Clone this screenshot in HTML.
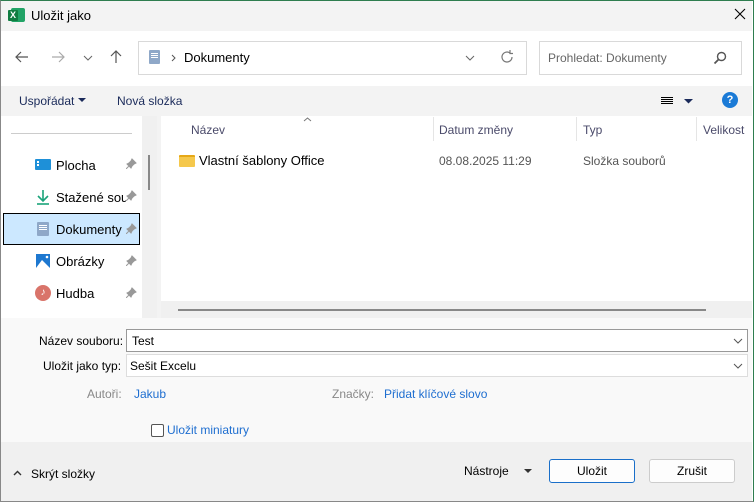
<!DOCTYPE html>
<html><head><meta charset="utf-8"><style>
*{box-sizing:border-box;margin:0;padding:0}
body{width:754px;height:502px;overflow:hidden;font-family:"Liberation Sans",sans-serif;font-size:12px;color:#000;background:#fff;position:relative}
.a{position:absolute}
.t{white-space:nowrap}
</style></head><body>
<div class="a" style="left:0;top:0;width:754px;height:502px;border:1px solid #888;border-top:1px solid #2e7d4f;border-right:1px solid #2e7d4f"></div>
<div class="a" style="left:1px;top:1px;width:751px;height:30px;background:#f3f3f3"></div>
<div class="a" style="left:11px;top:8px;width:14px;height:14px;background:#21a366;border-radius:2px"></div>
<div class="a" style="left:8px;top:10px;width:10px;height:11px;background:#107c41;border-radius:1px;color:#fff;font-size:9px;font-weight:bold;text-align:center;line-height:11px">X</div>
<div class="a t" style="left:31px;top:8px;font-size:13px">Uložit jako</div>
<svg class="a" style="left:734px;top:8px" width="12" height="12"><path d="M1 1L11 11M11 1L1 11" stroke="#000" stroke-width="1.1"/></svg>
<svg class="a" style="left:15px;top:51px" width="14" height="12"><path d="M13 6H1M6 1L1 6L6 11" stroke="#555" fill="none" stroke-width="1.2"/></svg>
<svg class="a" style="left:51px;top:51px" width="14" height="12"><path d="M1 6H13M8 1L13 6L8 11" stroke="#aaa" fill="none" stroke-width="1.2"/></svg>
<svg class="a" style="left:83px;top:55px" width="10" height="6"><path d="M1 1L5 5L9 1" stroke="#666" fill="none"/></svg>
<svg class="a" style="left:110px;top:50px" width="12" height="14"><path d="M6 13V1M1 6L6 1L11 6" stroke="#555" fill="none" stroke-width="1.2"/></svg>
<div class="a" style="left:138px;top:41px;width:389px;height:34px;border:1px solid #d9d9d9;background:#fff"></div>
<div class="a" style="left:149px;top:50px;width:11px;height:14px;background:#8fa8c8;border-radius:1px"></div>
<div class="a" style="left:151px;top:53px;width:7px;height:1px;background:#fff;box-shadow:0 2px 0 #fff,0 4px 0 #fff"></div>
<svg class="a" style="left:171px;top:54px" width="5" height="8"><path d="M1 1L4 4L1 7" stroke="#555" fill="none"/></svg>
<div class="a t" style="left:184px;top:50px;font-size:13px">Dokumenty</div>
<svg class="a" style="left:465px;top:55px" width="10" height="6"><path d="M1 1L5 5L9 1" stroke="#666" fill="none"/></svg>
<svg class="a" style="left:500px;top:50px" width="14" height="14"><path d="M12 7A5 5 0 1 1 10 3M10 0V3.5H13" stroke="#777" fill="none" stroke-width="1.2"/></svg>
<div class="a" style="left:539px;top:41px;width:203px;height:34px;border:1px solid #d9d9d9;background:#fff"></div>
<div class="a t" style="left:548px;top:51px;color:#666">Prohledat: Dokumenty</div>
<svg class="a" style="left:713px;top:51px" width="14" height="14"><circle cx="8.5" cy="5.5" r="4" stroke="#555" fill="none" stroke-width="1.4"/><path d="M5.5 8.5L1.5 12.5" stroke="#555" stroke-width="1.8"/></svg>
<div class="a" style="left:1px;top:86px;width:751px;height:30px;background:#f3f3f3"></div>
<div class="a t" style="left:19px;top:94px;color:#1a2a5a">Uspořádat</div>
<svg class="a" style="left:78px;top:98px" width="8" height="5"><path d="M0 0H8L4 4Z" fill="#1a2a5a"/></svg>
<div class="a t" style="left:117px;top:94px;color:#1a2a5a">Nová složka</div>
<div class="a" style="left:661px;top:97px;width:12px;height:1px;background:#000;box-shadow:0 2px 0 #000,0 4px 0 #000,0 6px 0 #000"></div>
<svg class="a" style="left:684px;top:99px" width="9" height="5"><path d="M0 0H9L4.5 4.5Z" fill="#1a2a5a"/></svg>
<div class="a" style="left:722px;top:92px;width:16px;height:16px;border-radius:50%;background:#1a7ad6;color:#fff;font-weight:bold;font-size:11px;text-align:center;line-height:16px">?</div>
<div class="a" style="left:11px;top:133px;width:121px;height:1px;background:#ccc"></div>
<div class="a" style="left:142px;top:116px;width:15px;height:202px;background:#f0f0f0"></div>
<div class="a" style="left:148px;top:155px;width:2px;height:35px;background:#888"></div>
<div class="a" style="left:157px;top:116px;width:4px;height:202px;background:#f3f3f3"></div>
<div class="a" style="left:3px;top:213px;width:137px;height:32px;background:#cce8ff;border:1px solid #000"></div>
<!-- desktop icon -->
<div class="a" style="left:35px;top:159px;width:16px;height:11px;background:#1e90d8;border-radius:1px"></div>
<div class="a" style="left:37px;top:161px;width:2px;height:2px;background:#fff;box-shadow:0 3px 0 #fff"></div>
<!-- download icon -->
<svg class="a" style="left:36px;top:189px" width="14" height="16"><path d="M7 1V11M2 7L7 12L12 7" stroke="#1aa37a" fill="none" stroke-width="1.6"/><path d="M1 15H13" stroke="#1aa37a" stroke-width="1.6"/></svg>
<!-- docs -->
<div class="a" style="left:37px;top:222px;width:12px;height:14px;background:#8fa8c8;border-radius:1px"></div>
<div class="a" style="left:39px;top:225px;width:8px;height:1px;background:#fff;box-shadow:0 2px 0 #fff,0 4px 0 #fff"></div>
<!-- pictures -->
<svg class="a" style="left:36px;top:254px" width="14" height="14"><rect width="14" height="14" fill="#1e78d0"/><path d="M0 14L6 6L14 14Z" fill="#fff"/><circle cx="11" cy="3" r="1.3" fill="#fff"/></svg>
<div class="a" style="left:35px;top:285px;width:16px;height:16px;border-radius:50%;background:#d9746a;color:#fff;font-size:10px;text-align:center;line-height:16px">♪</div>
<div class="a t" style="left:56px;top:158px;font-size:13px">Plocha</div>
<div class="a t" style="left:56px;top:190px;font-size:13px;width:70px;overflow:hidden">Stažené soubory</div>
<div class="a t" style="left:56px;top:222px;font-size:13px">Dokumenty</div>
<div class="a t" style="left:56px;top:254px;font-size:13px">Obrázky</div>
<div class="a t" style="left:56px;top:286px;font-size:13px">Hudba</div>
<svg class="a" style="left:126px;top:158px" width="11" height="11"><path d="M6 1L10 5L8 6L6 8L5 10L1 6L3 5L5 3Z M3 8L0 11" fill="#999" stroke="#999"/></svg>
<svg class="a" style="left:126px;top:190px" width="11" height="11"><path d="M6 1L10 5L8 6L6 8L5 10L1 6L3 5L5 3Z M3 8L0 11" fill="#999" stroke="#999"/></svg>
<svg class="a" style="left:126px;top:223px" width="11" height="11"><path d="M6 1L10 5L8 6L6 8L5 10L1 6L3 5L5 3Z M3 8L0 11" fill="#999" stroke="#999"/></svg>
<svg class="a" style="left:126px;top:255px" width="11" height="11"><path d="M6 1L10 5L8 6L6 8L5 10L1 6L3 5L5 3Z M3 8L0 11" fill="#999" stroke="#999"/></svg>
<svg class="a" style="left:126px;top:287px" width="11" height="11"><path d="M6 1L10 5L8 6L6 8L5 10L1 6L3 5L5 3Z M3 8L0 11" fill="#999" stroke="#999"/></svg>
<svg class="a" style="left:303px;top:117px" width="9" height="5"><path d="M1 4L4.5 1L8 4" stroke="#777" fill="none"/></svg>
<div class="a t" style="left:191px;top:123px;color:#4a4a6a">Název</div>
<div class="a" style="left:433px;top:117px;width:1px;height:24px;background:#e5e5e5"></div>
<div class="a t" style="left:439px;top:123px;color:#4a4a6a">Datum změny</div>
<div class="a" style="left:576px;top:117px;width:1px;height:24px;background:#e5e5e5"></div>
<div class="a t" style="left:583px;top:123px;color:#4a4a6a">Typ</div>
<div class="a" style="left:696px;top:117px;width:1px;height:24px;background:#e5e5e5"></div>
<div class="a t" style="left:703px;top:123px;color:#4a4a6a">Velikost</div>
<div class="a" style="left:179px;top:155px;width:16px;height:12px;background:#f5c84c;border-radius:1px;border-top:2px solid #e6a817"></div>
<div class="a t" style="left:199px;top:153px;font-size:13px">Vlastní šablony Office</div>
<div class="a t" style="left:439px;top:154px;color:#555">08.08.2025 11:29</div>
<div class="a t" style="left:583px;top:154px;color:#555">Složka souborů</div>
<div class="a" style="left:161px;top:301px;width:591px;height:17px;background:#f0f0f0"></div>
<div class="a" style="left:178px;top:309px;width:528px;height:2px;background:#888"></div>
<div class="a" style="left:1px;top:318px;width:751px;height:124px;background:#f9f9f9"></div>
<div class="a t" style="left:39px;top:334px">Název souboru:</div>
<div class="a" style="left:126px;top:329px;width:622px;height:23px;background:#fff;border:1px solid #999"></div>
<div class="a t" style="left:132px;top:334px">Test</div>
<svg class="a" style="left:733px;top:338px" width="10" height="6"><path d="M1 1L5 5L9 1" stroke="#555" fill="none"/></svg>
<div class="a t" style="left:43px;top:359px">Uložit jako typ:</div>
<div class="a" style="left:126px;top:354px;width:622px;height:23px;background:#fff;border:1px solid #ddd"></div>
<div class="a t" style="left:130px;top:359px">Sešit Excelu</div>
<svg class="a" style="left:733px;top:363px" width="10" height="6"><path d="M1 1L5 5L9 1" stroke="#555" fill="none"/></svg>
<div class="a t" style="left:87px;top:387px;color:#888">Autoři:</div>
<div class="a t" style="left:134px;top:387px;color:#1e6ed0">Jakub</div>
<div class="a t" style="left:332px;top:387px;color:#888">Značky:</div>
<div class="a t" style="left:384px;top:387px;color:#1e6ed0">Přidat klíčové slovo</div>
<div class="a" style="left:151px;top:424px;width:13px;height:13px;border:1px solid #555;border-radius:2px;background:#fff"></div>
<div class="a t" style="left:167px;top:423px;color:#1e6ed0">Uložit miniatury</div>
<div class="a" style="left:1px;top:442px;width:751px;height:59px;background:#f0f0f0"></div>
<svg class="a" style="left:13px;top:470px" width="9" height="6"><path d="M1 5L4.5 1.5L8 5" stroke="#333" fill="none" stroke-width="1.4"/></svg>
<div class="a t" style="left:31px;top:467px">Skrýt složky</div>
<div class="a t" style="left:464px;top:464px">Nástroje</div>
<svg class="a" style="left:524px;top:469px" width="8" height="5"><path d="M0 0H8L4 4Z" fill="#333"/></svg>
<div class="a" style="left:549px;top:459px;width:86px;height:24px;background:#fdfdfd;border:1px solid #1a6fc9;border-radius:3px;text-align:center;line-height:22px">Uložit</div>
<div class="a" style="left:649px;top:459px;width:86px;height:24px;background:#fdfdfd;border:1px solid #ccc;border-radius:3px;text-align:center;line-height:22px">Zrušit</div>
</body></html>
